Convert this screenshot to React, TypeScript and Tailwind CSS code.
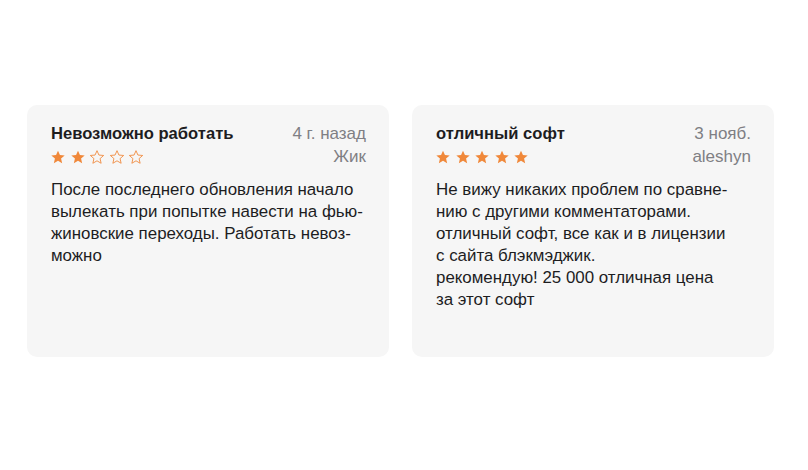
import React from 'react';

type Review = {
    title: string;
    date: string;
    author: string;
    rating: number;
    lines: string[];
};

const reviews: Review[] = [
    {
        title: 'Невозможно работать',
        date: '4 г. назад',
        author: 'Жик',
        rating: 2,
        lines: [
            'После последнего обновления начало',
            'вылекать при попытке навести на фью-',
            'жиновские переходы. Работать невоз-',
            'можно',
        ],
    },
    {
        title: 'отличный софт',
        date: '3 нояб.',
        author: 'aleshyn',
        rating: 5,
        lines: [
            'Не вижу никаких проблем по сравне-',
            'нию с другими комментаторами.',
            'отличный софт, все как и в лицензии',
            'с сайта блэкмэджик.',
            'рекомендую! 25 000 отличная цена',
            'за этот софт',
        ],
    },
];

const Star: React.FC<{ filled: boolean }> = ({ filled }) => (
    <svg viewBox="0 0 24 24" className="w-[16px] h-[16px]">
        <path
            d="M12 2.5l2.9 6.6 7.1.6-5.4 4.7 1.6 7-6.2-3.7-6.2 3.7 1.6-7L2 9.7l7.1-.6z"
            fill={filled ? '#f0883a' : 'none'}
            stroke="#f0883a"
            strokeWidth={filled ? 0 : 1.3}
            strokeLinejoin="round"
        />
    </svg>
);

const ReviewCard: React.FC<{ review: Review }> = ({ review }) => (
    <div className="w-[362px] h-[252px] rounded-[10px] bg-[#f6f6f6] pl-6 pr-[23px] pt-[18px]">
        <div className="flex justify-between items-baseline">
            <h3 className="text-[16.6px] font-bold text-[#1d1d1f] leading-[22px]">{review.title}</h3>
            <span className="text-[17px] text-[#7f7f84] leading-[22px]">{review.date}</span>
        </div>
        <div className="flex justify-between items-center mt-[1px]">
            <div className="flex gap-[3.5px] -ml-[1px]">
                {[0, 1, 2, 3, 4].map((i) => (
                    <Star key={i} filled={i < review.rating} />
                ))}
            </div>
            <span className="text-[17px] text-[#7f7f84] leading-[22px]">{review.author}</span>
        </div>
        <p className="mt-[11px] text-[16.9px] leading-[22px] text-[#1d1d1f]">
            {review.lines.map((l, i) => (
                <React.Fragment key={i}>
                    {l}
                    {i < review.lines.length - 1 && <br />}
                </React.Fragment>
            ))}
        </p>
    </div>
);

export default function App() {
    return (
        <div
            className="w-[808px] h-[470px] bg-white flex items-start pl-[27px] pt-[105px] gap-[23px]"
            style={{ fontFamily: '"Liberation Sans", Arial, sans-serif' }}
        >
            {reviews.map((r) => (
                <ReviewCard key={r.title} review={r} />
            ))}
        </div>
    );
}
